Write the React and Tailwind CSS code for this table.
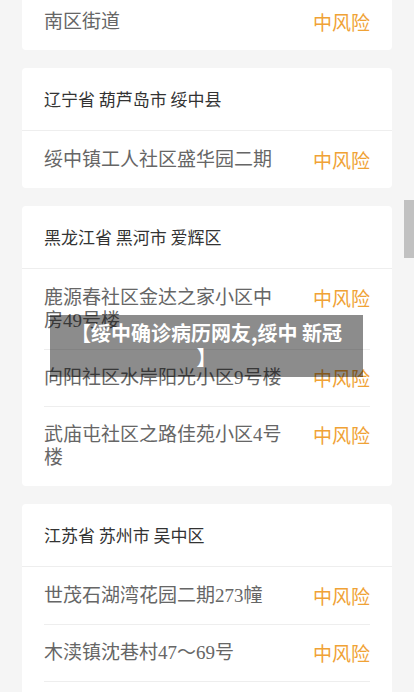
import React from 'react';

const groups = [
  { area: null, rows: ['南区街道'] },
  { area: '辽宁省 葫芦岛市 绥中县', rows: ['绥中镇工人社区盛华园二期'] },
  {
    area: '黑龙江省 黑河市 爱辉区',
    rows: ['鹿源春社区金达之家小区中房49号楼', '向阳社区水岸阳光小区9号楼', '武庙屯社区之路佳苑小区4号楼'],
  },
  { area: '江苏省 苏州市 吴中区', rows: ['世茂石湖湾花园二期273幢', '木渎镇沈巷村47～69号', '长桥街道龙西社区'] },
];

const RiskRow = ({ name, first }) => (
  <div
    className={`flex justify-between items-start pb-[17px] leading-[23px] ${
      first ? 'pt-[17px]' : 'pt-[16px] border-t border-[#eeeeee]'
    }`}
  >
    <span className="w-[242px] text-[19px] text-[#666666] font-['Liberation_Serif','Noto_Sans_CJK_SC',serif]">
      {name}
    </span>
    <span className="text-[19px] text-[#f0a235] font-['Noto_Sans_CJK_SC',sans-serif]">中风险</span>
  </div>
);

export default function App() {
  return (
    <div className="relative h-[692px] overflow-hidden bg-[#f5f5f5] font-['Noto_Sans_CJK_SC',sans-serif]">
      <div className="mt-[-7px] px-[22px] flex flex-col gap-[18px]">
        {groups.map((g, i) => (
          <div key={i} className="bg-white rounded-[4px]">
            {g.area && (
              <div className="h-[63px] flex items-center px-[22px] border-b border-[#eeeeee] text-[17px] text-[#333333]">
                {g.area}
              </div>
            )}
            <div className="px-[22px]">
              {g.rows.map((r, j) => (
                <RiskRow key={j} name={r} first={j === 0} />
              ))}
            </div>
          </div>
        ))}
      </div>

      {/* title overlay */}
      <div className="absolute left-[50px] top-[315px] w-[313px] bg-black/45 px-3 pt-[6px] pb-[8px] text-center text-white font-bold text-[20px] leading-[24px] whitespace-nowrap">
        【绥中确诊病历网友,绥中 新冠
        <br />】
      </div>

      {/* scrollbar thumb */}
      <div className="absolute right-0 top-[200px] w-[10px] h-[58px] bg-[#c1c1c1]" />
    </div>
  );
}
